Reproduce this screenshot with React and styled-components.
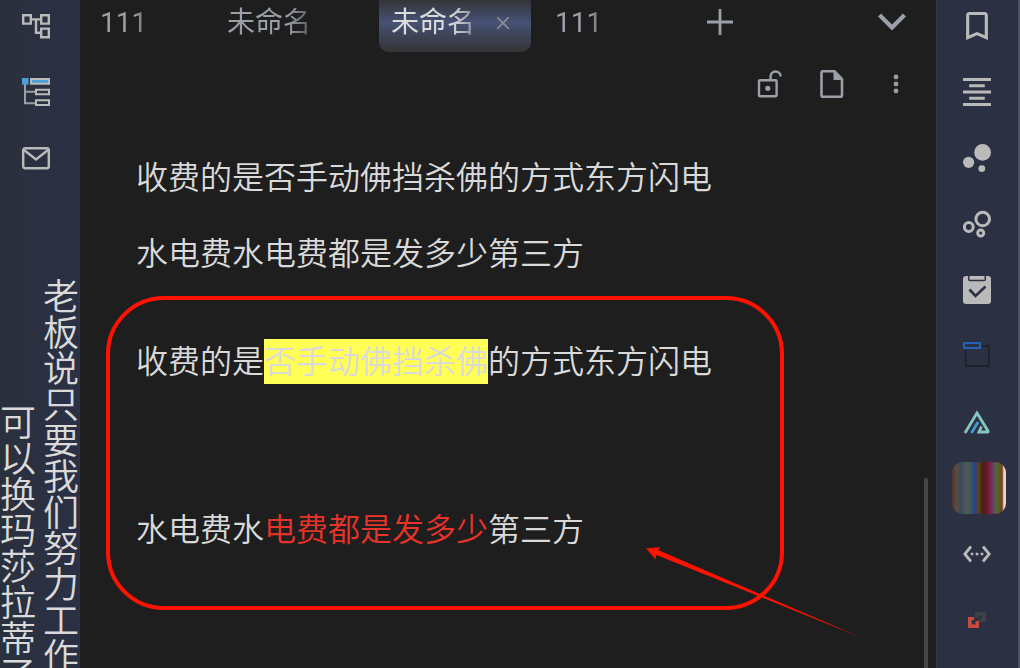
import React from "react";
import styled, { createGlobalStyle, css } from "styled-components";

const sans = `Roboto, "Noto Sans CJK SC", sans-serif`;

const GlobalStyle = createGlobalStyle`
  *, *::before, *::after { box-sizing: border-box; }
  body { margin: 0; background: #1e1e1e; font-family: ${sans}; }
  button { font: inherit; color: inherit; background: none; border: 0; padding: 0; }
  svg { display: block; }
`;

const Shell = styled.div`
  display: flex;
  height: 100vh;
  overflow: hidden;
  color: #dadada;
`;

const LeftRibbon = styled.aside`
  flex: 0 0 80px;
  display: flex;
  flex-direction: column;
  justify-content: space-between;
  background: linear-gradient(to right, #2a303c, #2b3145);
  box-shadow: inset -1px 0 #343438;
`;

const RightRibbon = styled.aside`
  flex: 0 0 84px;
  background: #2b3143;
  box-shadow: inset 1px 0 #38383c;
  border-right: 2px solid #495164;
`;

const IconList = styled.nav`
  display: flex;
  flex-direction: column;
  align-items: center;
  gap: 14px;
  padding-right: ${(p) => (p.$inset ? "8px" : "0")};
  color: #bababa;
`;

const IconButton = styled.button`
  width: 58px;
  height: 52px;
  display: grid;
  place-items: center;
`;

const Slogan = styled.div`
  display: flex;
  flex-direction: row-reverse;
  justify-content: space-between;
  height: 390px;
  padding-right: 1px;
  font-family: "Noto Sans CJK SC", sans-serif;
  font-weight: 350;
  font-size: 36px;
  line-height: 36px;
`;

const SloganColumn = styled.p`
  margin: 0;
  writing-mode: vertical-rl;
  white-space: nowrap;
  padding-top: ${(p) => (p.$lower ? "126px" : "0")};
`;

const Main = styled.main`
  position: relative;
  flex: 1;
  min-width: 0;
  display: flex;
  flex-direction: column;
`;

const TabBar = styled.header`
  display: flex;
  justify-content: space-between;
  height: 52px;
  color: #9a9fa8;
`;

const Tabs = styled.div`
  display: flex;
  gap: 12px;
`;

const Tab = styled.div`
  display: flex;
  align-items: center;
  width: ${(p) => (p.$first ? "123px" : "152px")};
  padding: 0 12px 6px ${(p) => (p.$first ? "20px" : "12px")};
  border-radius: 0 0 10px 10px;
  ${(p) =>
    p.$active &&
    css`
      color: #dcdcdc;
      background: linear-gradient(#343538, #465274 43%, #333435);
    `}
`;

const TabTitle = styled.button`
  width: ${(p) => (p.$short ? "50px" : "86px")};
  overflow: hidden;
  text-align: left;
  white-space: nowrap;
  font-size: 28px;
  line-height: 40px;
  mask-image: linear-gradient(to right, #000 70%, #0006);
`;

const TabClose = styled.button`
  margin-left: auto;
  width: 32px;
  height: 28px;
  display: grid;
  place-items: center;
  color: #858b99;
`;

const BarButton = styled.button`
  width: ${(p) => (p.$narrow ? "26px" : "48px")};
  height: 44px;
  display: grid;
  place-items: center;
`;

const MenuSlot = styled.div`
  padding-right: 20px;
`;

const Toolbar = styled.div`
  display: flex;
  justify-content: flex-end;
  align-items: center;
  gap: 16px;
  height: 64px;
  padding-right: 16px;
  color: #9a9fa8;
`;

const Editor = styled.article`
  flex: 1;
  min-height: 0;
  display: flex;
  justify-content: space-between;
`;

const Note = styled.div`
  padding: 35px 0 0 56px;
  font-family: "Noto Sans CJK SC", sans-serif;
  font-weight: 350;
  font-size: 32px;
  line-height: 48px;
`;

const Line = styled.p`
  margin: 0 0 ${(p) => p.$after || 0}px;
`;

const Highlight = styled.mark`
  padding-bottom: 2px;
  color: inherit;
  background: linear-gradient(#ffff55, #ffff55) bottom / 100% 45px no-repeat;
`;

const RedText = styled.span`
  color: #e8332a;
`;

const ScrollThumb = styled.div`
  align-self: flex-end;
  width: 4px;
  height: 190px;
  margin-right: 8px;
  border-radius: 2px 2px 0 0;
  background: #464646;
`;

const MarkerBox = styled.div`
  position: absolute;
  left: 26px;
  top: 296px;
  width: 678px;
  height: 314px;
  border: 4px solid #ff1200;
  border-radius: 58px;
  pointer-events: none;
`;

const MarkerArrow = styled.svg`
  position: absolute;
  left: 566px;
  top: 546px;
  pointer-events: none;
`;

const ColorSwatch = styled.span`
  justify-self: end;
  width: 54px;
  height: 52px;
  border-radius: 11px;
  background: linear-gradient(
    to right,
    #56352f 0%, #5c4c40 9%, #36485f 17%, #4a5a59 24%, #4b594f 33%,
    #244789 40%, #2b4380 44%, #65420c 50%, #4a2219 56%, #591a1c 61%,
    #761536 67%, #6d3765 75%, #4b6a34 83%, #65511f 89%, #8a3f10 93%,
    #e6d9cf 96%, #e0d6d0 100%
  );
`;

const Icon = ({ children, ...rest }) => (
  <svg width="28" height="28" viewBox="0 0 28 28" fill="none" stroke="currentColor" strokeWidth="2.4" aria-hidden="true" {...rest}>
    {children}
  </svg>
);

const leftIcons = [
  ["关系树", <Icon><path d="M1.2 3.2h7.6v8.4H1.2zM19.2 3.2h7.6v8.4h-7.6zM19.2 16.6h7.6v8.6h-7.6zM10 7.4h8M14 7.4v13.3h4" /></Icon>],
  ["大纲", (
    <Icon strokeWidth="2">
      <path d="M3 6v19.3h11M3 13.8h11" stroke="#9a9fa2" />
      <path d="M0 0h6.6v6.6H0z" fill="#4d9fd9" stroke="none" />
      <path d="M9 1h18v4.7H9z" fill="#4d9fd9" />
      <path d="M14 11.7h13v4.6H14zM14 22.3h13V27H14z" />
    </Icon>
  )],
  ["邮件", <Icon><rect x="1.2" y="4.2" width="25.6" height="20" rx="2" /><path d="M2 6l12 9.5L26 6" /></Icon>],
];

const rightIcons = [
  ["书签", <Icon viewBox="3 3 18 18" fill="currentColor" stroke="none"><path d="M17 3H7c-1.1 0-2 .9-2 2v16l7-3 7 3V5c0-1.1-.9-2-2-2zm0 15l-5-2.18L7 18V5h10v13z" /></Icon>],
  ["居中", <Icon viewBox="3 3 18 18" fill="currentColor" stroke="none"><path d="M7 15v2h10v-2H7zm-4 6h18v-2H3v2zm0-8h18v-2H3v2zm4-6v2h10V7H7zM3 3v2h18V3H3z" /></Icon>],
  ["关系图谱", <Icon fill="currentColor" stroke="none"><circle cx="19.6" cy="8.4" r="8.4" /><circle cx="5.6" cy="18.3" r="5.6" /><circle cx="18.8" cy="24.6" r="3.4" /></Icon>],
  ["局部图谱", <Icon strokeWidth="3"><circle cx="19.7" cy="9" r="6.8" /><circle cx="5.8" cy="17" r="4.4" /><circle cx="17.7" cy="23" r="3" /></Icon>],
  ["任务", (
    <Icon stroke="#2b3143">
      <rect width="28" height="28" rx="3" fill="#bababa" stroke="none" />
      <path d="M5.7 0v3.2q0 1.3 1.3 1.3h14q1.3 0 1.3-1.3V0" strokeWidth="1.5" />
      <path d="M6.5 13.5l6 6.5L22.5 10.5" strokeWidth="2.6" />
    </Icon>
  )],
  ["文件夹", <Icon><path d="M19 4h7v20H2.6V8" stroke="#20232a" strokeWidth="1.8" /><path d="M1 1h16v5H1z" stroke="#2460b4" strokeWidth="2" /></Icon>],
  ["三角", (
    <Icon stroke="#84c7c0" strokeWidth="2.8">
      <path d="M2 25L14 5L25 23Q25.5 24 24.5 24H16L18.5 18.5" />
      <path d="M8.5 25L15 14" stroke="#3f9bd0" />
    </Icon>
  )],
  ["色带", <ColorSwatch />],
  ["代码", (
    <Icon strokeWidth="2.8">
      <path d="M8 6.5L1.8 14L8 21.5M20 6.5L26.2 14L20 21.5" />
      <path d="M7.7 14h2.6M12.7 14h2.6M17.7 14h2.6" strokeWidth="2.4" />
    </Icon>
  )],
  ["链接", (
    <Icon>
      <path d="M12 6H23V16H16V12.5H19V9.5H15.5V12H12z" fill="#3e4045" stroke="none" />
      <path d="M5 11H11V14H8.7V18.5H12.5V15H16V22H5z" fill="#cb4a3d" stroke="none" />
    </Icon>
  )],
];

const tabs = [
  { title: "111", first: true },
  { title: "未命名" },
  { title: "未命名", active: true },
  { title: "111" },
];

export default function App() {
  return (
    <>
      <GlobalStyle />
      <Shell>
        <LeftRibbon>
          <IconList $inset>
            {leftIcons.map(([label, icon]) => <IconButton key={label} aria-label={label}>{icon}</IconButton>)}
          </IconList>
          <Slogan>
            <SloganColumn>老板说只要我们努力工作</SloganColumn>
            <SloganColumn $lower>可以换玛莎拉蒂了</SloganColumn>
          </Slogan>
        </LeftRibbon>

        <Main>
          <TabBar>
            <Tabs>
              {tabs.map((t, i) => (
                <Tab key={i} $first={t.first} $active={t.active}>
                  <TabTitle $short={t.title === "111"}>{t.title}</TabTitle>
                  {t.active && (
                    <TabClose aria-label="关闭">
                      <Icon width="12" height="12" viewBox="0 0 12 12" strokeWidth="1.8"><path d="M0 0l12 12M12 0L0 12" /></Icon>
                    </TabClose>
                  )}
                </Tab>
              ))}
              <BarButton $narrow aria-label="新标签页">
                <Icon width="26" height="26" viewBox="0 0 26 26" strokeWidth="2.8"><path d="M0 13h26M13 0v26" /></Icon>
              </BarButton>
            </Tabs>
            <MenuSlot>
              <BarButton aria-label="标签列表">
                <Icon strokeWidth="4.2"><path d="M1.5 7L14 19.5L26.5 7" /></Icon>
              </BarButton>
            </MenuSlot>
          </TabBar>

          <Toolbar>
            <BarButton aria-label="解锁">
              <Icon>
                <rect x="5" y="10.2" width="17.6" height="16" rx="1" />
                <path d="M16.600 10V6.500a5 5 0 0 1 10 0" />
                <circle cx="13.800" cy="18.300" r="2.600" fill="currentColor" stroke="none" />
              </Icon>
            </BarButton>
            <BarButton aria-label="文件">
              <Icon strokeWidth="2.6">
                <path d="M5 1.3H16.500L24 9V25.200q0 1.500-1.500 1.500H5Q3.500 26.700 3.500 25.200V2.800Q3.500 1.300 5 1.300z" />
                <path d="M15.500 1v9h9z" fill="currentColor" stroke="none" />
              </Icon>
            </BarButton>
            <BarButton aria-label="更多">
              <Icon fill="currentColor" stroke="none"><circle cx="14" cy="7" r="2.4" /><circle cx="14" cy="14" r="2.4" /><circle cx="14" cy="21" r="2.4" /></Icon>
            </BarButton>
          </Toolbar>

          <Editor>
            <Note>
              <Line $after={28}>收费的是否手动佛挡杀佛的方式东方闪电</Line>
              <Line $after={60}>水电费水电费都是发多少第三方</Line>
              <Line $after={120}>收费的是<Highlight>否手动佛挡杀佛</Highlight>的方式东方闪电</Line>
              <Line>水电费水<RedText>电费都是发多少</RedText>第三方</Line>
            </Note>
            <ScrollThumb />
          </Editor>

          <MarkerBox />
          <MarkerArrow width="216" height="94" viewBox="0 0 216 94" aria-hidden="true">
            <path d="M0 2.3L14.5 1.3L12 4L215 91.5L10.5 9L9.5 13.5z" fill="#ff1200" />
          </MarkerArrow>
        </Main>

        <RightRibbon>
          <IconList>
            {rightIcons.map(([label, icon]) => <IconButton key={label} aria-label={label}>{icon}</IconButton>)}
          </IconList>
        </RightRibbon>
      </Shell>
    </>
  );
}
